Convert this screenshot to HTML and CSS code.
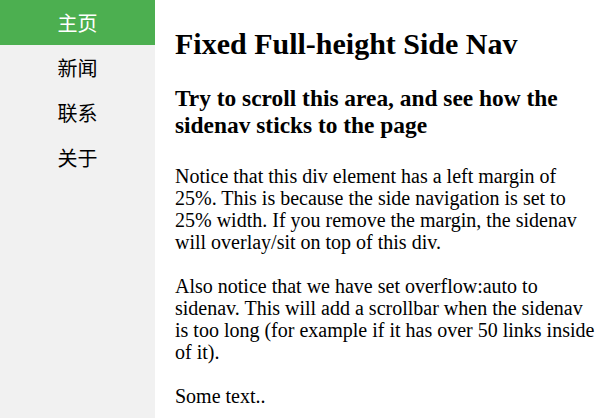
FILE: index.html
```html
<!DOCTYPE html>
<html lang="zh">
<head>
<meta charset="utf-8">
<title>Fixed Full-height Side Nav</title>
<link rel="stylesheet" href="styles.css">
</head>
<body>
<div class="layout">
  <nav class="sidenav">
    <a class="nav-link active" href="#">主页</a>
    <a class="nav-link" href="#">新闻</a>
    <a class="nav-link" href="#">联系</a>
    <a class="nav-link" href="#">关于</a>
  </nav>
  <main class="main">
    <h1 class="title">Fixed Full-height Side Nav</h1>
    <h2 class="subtitle">Try to scroll this area, and see how the sidenav sticks to the page</h2>
    <p class="text">Notice that this div element has a left margin of 25%. This is because the side navigation is set to 25% width. If you remove the margin, the sidenav will overlay/sit on top of this div.</p>
    <p class="text">Also notice that we have set overflow:auto to sidenav. This will add a scrollbar when the sidenav is too long (for example if it has over 50 links inside of it).</p>
    <p class="text">Some text..</p>
  </main>
</div>
</body>
</html>
```

FILE: styles.css
```css
html, body {
  margin: 0;
  padding: 0;
  background: #ffffff;
  height: 100%;
  overflow: hidden;
}
.layout {
  display: flex;
  height: 100vh;
  font-family: "Liberation Serif", "Noto Sans CJK SC", serif;
  color: #000;
}
.sidenav {
  flex: 0 0 155px;
  background: #f1f1f1;
  display: flex;
  flex-direction: column;
}
.nav-link {
  display: block;
  height: 45px;
  line-height: 45px;
  text-align: center;
  font-size: 20px;
  color: #000;
  text-decoration: none;
  font-family: "Noto Sans CJK SC", sans-serif;
}
.nav-link.active {
  background: #4caf50;
  color: #fff;
}
.main {
  flex: 1;
  padding: 0 6px 0 20px;
}
.title {
  font-size: 30px;
  margin: 26px 0 0;
  line-height: 36px;
}
.subtitle {
  font-size: 23.4px;
  line-height: 27px;
  margin: 23px 0 26px;
}
.text {
  font-size: 20px;
  line-height: 22px;
  margin: 22px 0 0;
}
```
